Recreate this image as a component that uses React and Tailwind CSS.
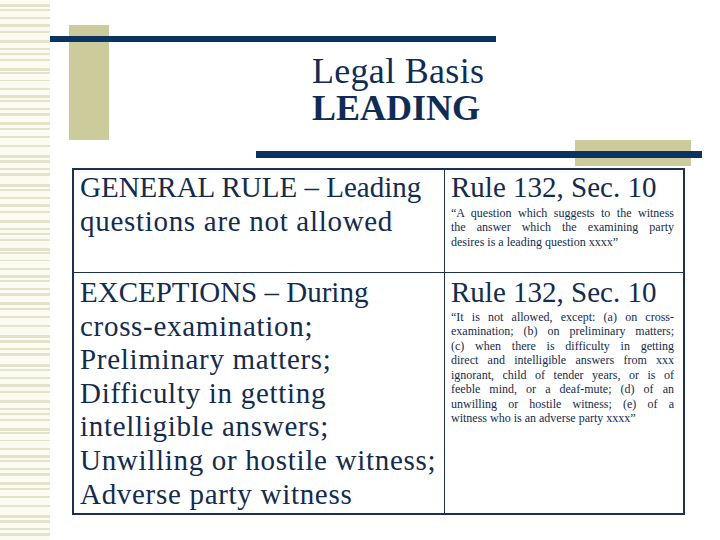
const stripeBase = [
  [4, 3], [9, 2], [17, 2], [24, 3], [31, 2], [40, 3], [48, 2], [53, 2], [59, 2],
  [68, 3], [72, 2], [80, 1], [88, 2], [95, 3], [100, 2], [108, 2], [113, 3],
  [122, 3], [128, 2], [136, 2], [145, 2], [155, 3], [160, 3], [168, 2], [173, 3],
];

const stripes = [0, 180, 360].flatMap((off) => stripeBase.map(([y, h]) => [y + off, h]));

const exceptions = [
  "EXCEPTIONS – During",
  "cross-examination;",
  "Preliminary matters;",
  "Difficulty in getting",
  "intelligible answers;",
  "Unwilling or hostile witness;",
  "Adverse party witness",
];

const quote1 = [
  "“A question which suggests to the witness",
  "the answer which the examining party",
  "desires is a leading question xxxx”",
];

const quote2 = [
  "“It is not allowed, except: (a) on cross-",
  "examination; (b) on preliminary matters;",
  "(c) when there is difficulty in getting",
  "direct and intelligible answers from xxx",
  "ignorant, child of tender years, or is of",
  "feeble mind, or a deaf-mute; (d) of an",
  "unwilling or hostile witness; (e) of a",
  "witness who is an adverse party xxxx”",
];

function Quote({ lines }) {
  return (
    <div className="text-[12px] leading-[14.5px]">
      {lines.map((line, i) => (
        <div
          key={i}
          className={i < lines.length - 1 ? "text-justify [text-align-last:justify] whitespace-nowrap" : "whitespace-nowrap"}
        >
          {line}
        </div>
      ))}
    </div>
  );
}

export default function App() {
  return (
    <div className="w-[720px] h-[540px] bg-white flex overflow-hidden font-['Liberation_Serif',serif] text-[#142b4d]">
      {/* Left striped strip */}
      <svg width="50" height="540" className="shrink-0 bg-[#fcfbf1]">
        {stripes.map(([y, h], i) => (
          <rect key={i} x="0" y={y} width="50" height={h} fill="#e3e2cb" />
        ))}
      </svg>

      <div className="flex-1 relative">
        {/* Tan accents, behind the bars */}
        <div className="absolute left-[19px] top-[25px] w-[40px] h-[115px] bg-[#cccb9c]" />
        <div className="absolute left-[525px] top-[140px] w-[116px] h-[26px] bg-[#cccb9c]" />

        <div className="relative flex flex-col">
          <div className="mt-[36px] w-[446px] h-[6px] bg-[#0b3463]" />

          {/* Title */}
          <div className="ml-[262px] mt-[11px] text-[36px] leading-[37px] text-[#0f2c55]">
            <div className="tracking-[0.3px]">Legal Basis</div>
            <div className="font-bold">LEADING</div>
          </div>

          <div className="ml-[206px] mt-[24px] w-[446px] h-[7px] bg-[#0b3463]" />

          {/* Table */}
          <div className="ml-[22px] mt-[10px] w-[613px] h-[347px] border-2 border-[#1a3152] bg-white grid grid-cols-[371px_1fr] grid-rows-[103px_1fr]">
            <div className="border-r border-b border-[#1a3152] pl-[6px] pt-[1px] text-[29px] leading-[33.6px]">
              <div className="whitespace-nowrap">GENERAL RULE – Leading</div>
              <div className="whitespace-nowrap tracking-[0.7px]">questions are not allowed</div>
            </div>
            <div className="border-b border-[#1a3152] pl-[6px] pr-[9px] pt-[1px]">
              <div className="text-[29px] leading-[33.6px] whitespace-nowrap">Rule 132, Sec. 10</div>
              <div className="mt-[1px]">
                <Quote lines={quote1} />
              </div>
            </div>
            <div className="border-r border-[#1a3152] pl-[6px] pt-[3px] text-[29px] leading-[33.6px]">
              {exceptions.map((line, i) => (
                <div key={line} className={i === 0 ? "whitespace-nowrap" : "whitespace-nowrap tracking-[0.7px]"}>
                  {line}
                </div>
              ))}
            </div>
            <div className="pl-[6px] pr-[9px] pt-[3px]">
              <div className="text-[29px] leading-[33.6px] whitespace-nowrap">Rule 132, Sec. 10</div>
              <Quote lines={quote2} />
            </div>
          </div>
        </div>
      </div>
    </div>
  );
}
